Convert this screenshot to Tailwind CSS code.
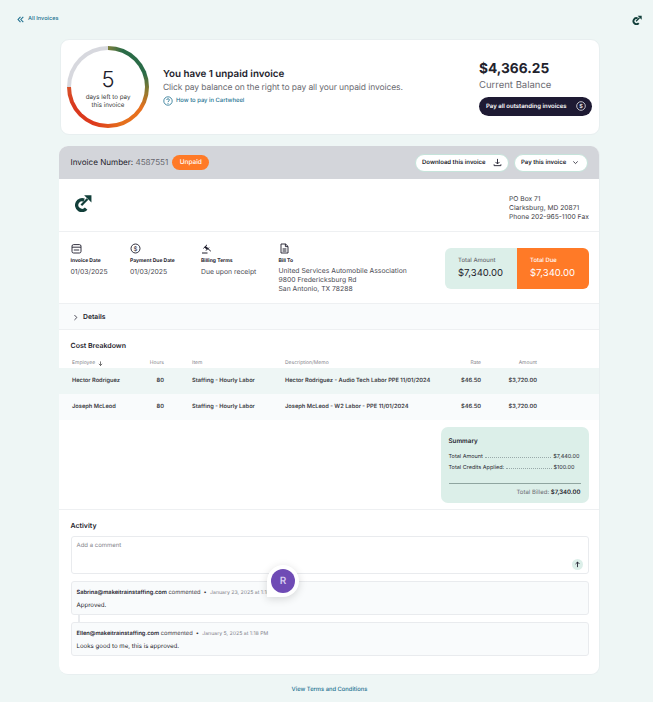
<!DOCTYPE html>
<html><head><meta charset="utf-8"><script src="https://cdn.jsdelivr.net/npm/@tailwindcss/browser@4"></script></head>
<body class="bg-[#eef6f5] font-['Inter','Liberation_Sans',sans-serif] text-[#1d1c2b] [text-rendering:geometricPrecision]">
<div class="w-[653px] h-[702px] overflow-hidden relative">
  <div class="h-[39px] flex items-center justify-between pl-[17px] pr-[11px]">
    <div class="flex items-center gap-[4px] text-[#20708f] text-[5.6px] font-medium">
      <svg class="w-[7px] h-[7px]" viewBox="0 0 8 8" fill="none" stroke="#20708f" stroke-width="1.2"><path d="M4 1 1.2 4 4 7M7.2 1 4.4 4l2.8 3"/></svg>
      <span>All Invoices</span>
    </div>
    <svg class="w-[10px] h-[10px]" viewBox="0 0 16 16" fill="none"><path d="M9 5.4A4.8 4.8 0 1 0 10.8 13" stroke="#123f3a" stroke-width="3"/><path d="M6.5 10 12 4.4" stroke="#123f3a" stroke-width="2"/><path d="M9 1h6.5v6.5z" fill="#123f3a"/></svg>
  </div>

  <div class="ml-[60px] w-[540px] h-[96px] bg-white rounded-[9px] border border-[#e8eff0] flex items-center pl-[6px] pr-[7px]">
    <div class="w-[82px] h-[82px] rounded-full p-[4px] shrink-0 bg-[conic-gradient(#7d7f3c_0deg,#2a6b47_22deg,#2a6b47_70deg,#8a7a30_95deg,#e8701e_122deg,#e5701c_160deg,#dd3a1c_200deg,#d9381e_240deg,#d8522a_270deg,#d7d8de_270deg,#d7d8de_360deg)]">
      <div class="w-full h-full rounded-full bg-white flex flex-col items-center pt-[19px]">
        <div class="text-[22px] leading-[22px] font-light">5</div>
        <div class="text-[6.2px] leading-[8px] text-center mt-[3px] text-[#333]">days left to pay<br>this invoice</div>
      </div>
    </div>
    <div class="ml-[14px] flex-1">
      <div class="text-[9.8px] leading-[13px] font-semibold">You have 1 unpaid invoice</div>
      <div class="text-[8.5px] leading-[13px] mt-[1px] text-[#6b6b72] tracking-[-0.1px]">Click pay balance on the right to pay all your unpaid invoices.</div>
      <div class="flex items-center gap-[3px] mt-[1px] text-[5.85px] font-medium text-[#20708f]">
        <svg class="w-[10px] h-[10px]" viewBox="0 0 10 10" fill="none" stroke="#20708f"><circle cx="5" cy="5" r="4.2" stroke-width=".8"/><path d="M3.7 4c0-1.7 2.7-1.7 2.7 0 0 1-1.4 1-1.4 2.1" stroke-width=".8"/><circle cx="5" cy="7.5" r=".3" stroke-width=".5"/></svg>
        <span>How to pay in Cartwheel</span>
      </div>
    </div>
    <div class="w-[113px] shrink-0">
      <div class="text-[13.7px] leading-[20px] font-bold text-[#22222c]">$4,366.25</div>
      <div class="text-[9.5px] leading-[12px] mt-[1px] text-[#6b6b72]">Current Balance</div>
      <div class="mt-[5px] h-[19px] w-[113px] rounded-full bg-[#1e1a33] text-white text-[6px] font-semibold flex items-center justify-between pl-[7px] pr-[6px]">
        <span>Pay all outstanding invoices</span>
        <svg class="w-[10px] h-[10px]" viewBox="0 0 10 10" fill="none"><circle cx="5" cy="5" r="4.3" stroke="#e8e8ee" stroke-width=".8"/><text x="5" y="7.1" font-size="5.6" text-anchor="middle" fill="#e8e8ee">$</text></svg>
      </div>
    </div>
  </div>

  <div class="ml-[59px] mt-[11px] w-[541px] h-[529px] bg-white rounded-[9px] overflow-hidden border-r border-b border-[#e8eff0] relative">
    <div class="h-[33px] bg-[#d3d5da] flex items-center justify-between pl-[11.5px] pr-[11px]">
      <div class="flex items-center gap-[4px]">
        <span class="text-[8.1px]">Invoice Number: <span class="text-[#66666e]">4587551</span></span>
        <span class="h-[15px] w-[37px] rounded-full bg-[#ff7a27] text-white text-[6.5px] font-medium flex items-center justify-center">Unpaid</span>
      </div>
      <div class="flex items-center gap-[5px]">
        <div class="h-[18px] w-[94px] rounded-full bg-white border border-[#c5e3da] text-[6px] font-semibold flex items-center justify-between pl-[6px] pr-[6px]">
          <span>Download this invoice</span>
          <svg class="w-[9px] h-[9px]" viewBox="0 0 10 10" fill="none" stroke="#1d1c2b" stroke-width="1"><path d="M5 1v5.4M2.8 4.4 5 6.6l2.2-2.2M1.2 7v1.5h7.6V7"/></svg>
        </div>
        <div class="h-[18px] w-[74px] rounded-full bg-white border border-[#c5e3da] text-[6px] font-semibold flex items-center justify-between pl-[6px] pr-[8px]">
          <span>Pay this invoice</span>
          <svg class="w-[7px] h-[7px]" viewBox="0 0 8 8" fill="none" stroke="#1d1c2b" stroke-width=".9"><path d="M1.5 2.8 4 5.2l2.5-2.4"/></svg>
        </div>
      </div>
    </div>

    <div class="h-[53px] border-b border-[#eef0f2] flex justify-between pl-[15px] pr-[11px]">
      <svg class="w-[18px] h-[18px] mt-[15px]" viewBox="0 0 16 16" fill="none"><path d="M9 5.4A4.8 4.8 0 1 0 10.8 13" stroke="#123f3a" stroke-width="3"/><path d="M6.5 10 12 4.4" stroke="#123f3a" stroke-width="2"/><path d="M9 1h6.5v6.5z" fill="#123f3a"/></svg>
      <div class="text-[6.7px] leading-[9px] text-[#3c3c44] pt-[16px] w-[79px] whitespace-nowrap">PO Box 71<br>Clarksburg, MD 20871<br>Phone 202-965-1100 Fax</div>
    </div>

    <div class="h-[72px] border-b border-[#eef0f2] flex pl-[11.5px] pr-[10px] pt-[11px] relative">
      <div class="w-[59.5px]">
        <svg class="w-[11px] h-[11px]" viewBox="0 0 11 11" fill="none" stroke="#1d1c2b" stroke-width=".9"><rect x="1" y="1.6" width="9" height="8.4" rx="1.6"/><path d="M1 4.2h9M2.8 7h5.4"/></svg>
        <div class="text-[5px] font-bold leading-[8px] mt-[3px] text-[#26252f]">Invoice Date</div>
        <div class="text-[6.8px] leading-[9px] mt-[2px] text-[#4a4a52]">01/03/2025</div>
      </div>
      <div class="w-[71px]">
        <svg class="w-[11px] h-[11px]" viewBox="0 0 11 11" fill="none" stroke="#1d1c2b" stroke-width=".9"><circle cx="5.5" cy="5.5" r="4.5"/><text x="5.5" y="7.6" font-size="6" text-anchor="middle" fill="#1d1c2b" stroke="none">$</text></svg>
        <div class="text-[5px] font-bold leading-[8px] mt-[3px] text-[#26252f]">Payment Due Date</div>
        <div class="text-[6.8px] leading-[9px] mt-[2px] text-[#4a4a52]">01/03/2025</div>
      </div>
      <div class="w-[77.5px]">
        <svg class="w-[11px] h-[11px]" viewBox="0 0 11 11" fill="none" stroke="#1d1c2b" stroke-width="1"><path d="M1 10h5.5"/><path d="M4 3.6 6.4 6" stroke-width="2"/><path d="M5.5 4.4 9.8 8.2M2.4 5.4 6 1.8M5 7.6l3-3"/></svg>
        <div class="text-[5px] font-bold leading-[8px] mt-[3px] text-[#26252f]">Billing Terms</div>
        <div class="text-[6.8px] leading-[9px] mt-[2px] text-[#4a4a52]">Due upon receipt</div>
      </div>
      <div>
        <svg class="w-[11px] h-[11px]" viewBox="0 0 11 11" fill="none" stroke="#1d1c2b" stroke-width=".9"><path d="M2 1h4.6L9 3.4V10H2z"/><path d="M6.4 1v2.6H9" /><path d="M3.6 6h3.8M3.6 8h3.8" stroke-width="1.1"/></svg>
        <div class="text-[5px] font-bold leading-[8px] mt-[3px] text-[#26252f]">Bill To</div>
        <div class="text-[6.8px] leading-[8.8px] mt-[2px] text-[#4a4a52]">United Services Automobile Association<br>9800 Fredericksburg Rd<br>San Antonio, TX 78288</div>
      </div>
      <div class="ml-auto mt-[5px] w-[144px] h-[41px] rounded-[6px] overflow-hidden flex">
        <div class="w-[72px] bg-[#dcefe9] pl-[13px] pt-[9px]">
          <div class="text-[5.9px] leading-[8px] font-medium text-[#6b6b72]">Total Amount</div>
          <div class="text-[9.5px] leading-[13px] mt-[2px]">$7,340.00</div>
        </div>
        <div class="w-[72px] bg-[#ff7a27] text-white pl-[13px] pt-[9px]">
          <div class="text-[5.9px] leading-[8px] font-medium">Total Due</div>
          <div class="text-[9.5px] leading-[13px] mt-[2px]">$7,340.00</div>
        </div>
      </div>
    </div>

    <div class="h-[26px] bg-[#f9fbfc] border-b border-[#eef0f2] flex items-center gap-[4px] pl-[13px] pt-[2px] text-[6.8px] font-semibold">
      <svg class="w-[7px] h-[7px]" viewBox="0 0 8 8" fill="none" stroke="#1d1c2b" stroke-width=".9"><path d="M2.8 1.2 5.6 4 2.8 6.8"/></svg>
      <span>Details</span>
    </div>

    <div class="pt-[11px] pl-[11.5px] text-[7px] leading-[9px] font-semibold">Cost Breakdown</div>
    <div class="mt-[9px] h-[9px] grid grid-cols-[13px_64px_28px_28px_93px_140px_56px_56px] items-center text-[5px] text-[#85858c]">
      <span></span><span class="flex items-center gap-[3px]">Employee <svg class="w-[5px] h-[5px]" viewBox="0 0 6 6" fill="none" stroke="#333" stroke-width=".8"><path d="M3 .5v5M1 3.4 3 5.4l2-2"/></svg></span>
      <span class="text-right">Hours</span><span></span><span>Item</span><span>Description/Memo</span><span class="text-right">Rate</span><span class="text-right">Amount</span>
    </div>
    <div class="h-[26px] bg-[#eef6f5] grid grid-cols-[13px_64px_28px_28px_93px_140px_56px_56px] items-center text-[5.7px] font-semibold text-[#3a3a42]">
      <span></span><span>Hector Rodriguez</span><span class="text-right">80</span><span></span><span class="whitespace-nowrap">Staffing - Hourly Labor</span><span class="whitespace-nowrap">Hector Rodriguez - Audio Tech Labor PPE 11/01/2024</span><span class="text-right">$46.50</span><span class="text-right">$3,720.00</span>
    </div>
    <div class="h-[26px] bg-[#f9fbfc] grid grid-cols-[13px_64px_28px_28px_93px_140px_56px_56px] items-center text-[5.7px] font-semibold text-[#3a3a42]">
      <span></span><span>Joseph McLeod</span><span class="text-right">80</span><span></span><span class="whitespace-nowrap">Staffing - Hourly Labor</span><span class="whitespace-nowrap">Joseph McLeod - W2 Labor - PPE 11/01/2024</span><span class="text-right">$46.50</span><span class="text-right">$3,720.00</span>
    </div>

    <div class="h-[90px] border-b border-[#eef0f2] flex justify-end pr-[10.5px] pt-[7px]">
      <div class="w-[148px] h-[76px] bg-[#dcefe9] rounded-[7px] px-[8px] pt-[10px]">
        <div class="text-[6.3px] leading-[8px] font-semibold text-[#26252f]">Summary</div>
        <div class="flex items-center text-[5.5px] leading-[8px] mt-[8px] text-[#2a2a32] w-[131px]"><span>Total Amount</span><span class="flex-1 mx-[2px] border-b border-dotted border-[#9aa]"></span><span>$7,440.00</span></div>
        <div class="flex items-center text-[5.5px] leading-[8px] mt-[3px] text-[#2a2a32] w-[126px]"><span>Total Credits Applied:</span><span class="flex-1 mx-[2px] border-b border-dotted border-[#9aa]"></span><span>$100.00</span></div>
        <div class="mt-[11px] border-t border-[#8fa5a0] text-right text-[6px] leading-[8px] pt-[5px] text-[#6b6b72]">Total Billed: <span class="font-semibold text-[#1d1c2b]">$7,340.00</span></div>
      </div>
    </div>

    <div class="pt-[11px] pl-[11.5px] pr-[10px]">
      <div class="text-[7px] leading-[9px] font-semibold">Activity</div>
      <div class="mt-[6px] h-[38px] rounded-[3px] border border-[#e9ebee] pl-[5px] pt-[5px] text-[6px] leading-[7px] text-[#85858c] relative">
        Add a comment
        <span class="absolute right-[5px] bottom-[3px] w-[11px] h-[11px] rounded-full bg-[#dcefe9] flex items-center justify-center"><svg class="w-[7px] h-[7px]" viewBox="0 0 8 8" fill="none" stroke="#1d1c2b" stroke-width="1"><path d="M4 7V1.2M1.8 3.4 4 1.2l2.2 2.2"/></svg></span>
      </div>
      <div class="mt-[7px] h-[34px] rounded-[3px] border border-[#e9ebee] bg-[#f9fbfc] pl-[5px] pt-[7px]">
        <div class="text-[5.7px] leading-[8px] text-[#3a3a42]"><b class="font-semibold text-[#26252f]">Sabrina@makeitrainstaffing.com</b> commented &nbsp;•&nbsp; <span class="text-[#85858c] text-[5.2px]">January 23, 2025 at 1:18 PM</span></div>
        <div class="text-[6.1px] leading-[8px] mt-[5px]">Approved.</div>
      </div>
      <div class="ml-[7px] w-[2px] h-[7px] bg-[#e9ebee]"></div>
      <div class="h-[34px] rounded-[3px] border border-[#e9ebee] bg-[#f9fbfc] pl-[5px] pt-[7px]">
        <div class="text-[5.7px] leading-[8px] text-[#3a3a42]"><b class="font-semibold text-[#26252f]">Ellen@makeitrainstaffing.com</b> commented &nbsp;•&nbsp; <span class="text-[#85858c] text-[5.2px]">January 5, 2025 at 1:18 PM</span></div>
        <div class="text-[6.1px] leading-[8px] mt-[5px]">Looks good to me, this is approved.</div>
      </div>
    </div>
  </div>

  <div class="mt-[11px] pl-[6px] text-center text-[5.8px] leading-[8px] font-medium text-[#20708f]">View Terms and Conditions</div>

  <div class="absolute left-[267px] top-[565px] w-[32px] h-[32px] rounded-full rounded-bl-[3px] bg-white shadow-[0_2px_8px_rgba(0,0,0,0.15)] flex items-center justify-center">
    <div class="w-[24px] h-[24px] rounded-full bg-[#6f4bb5] text-[#d8cdf0] text-[10px] font-semibold flex items-center justify-center">R</div>
  </div>
</div>
</body></html>
